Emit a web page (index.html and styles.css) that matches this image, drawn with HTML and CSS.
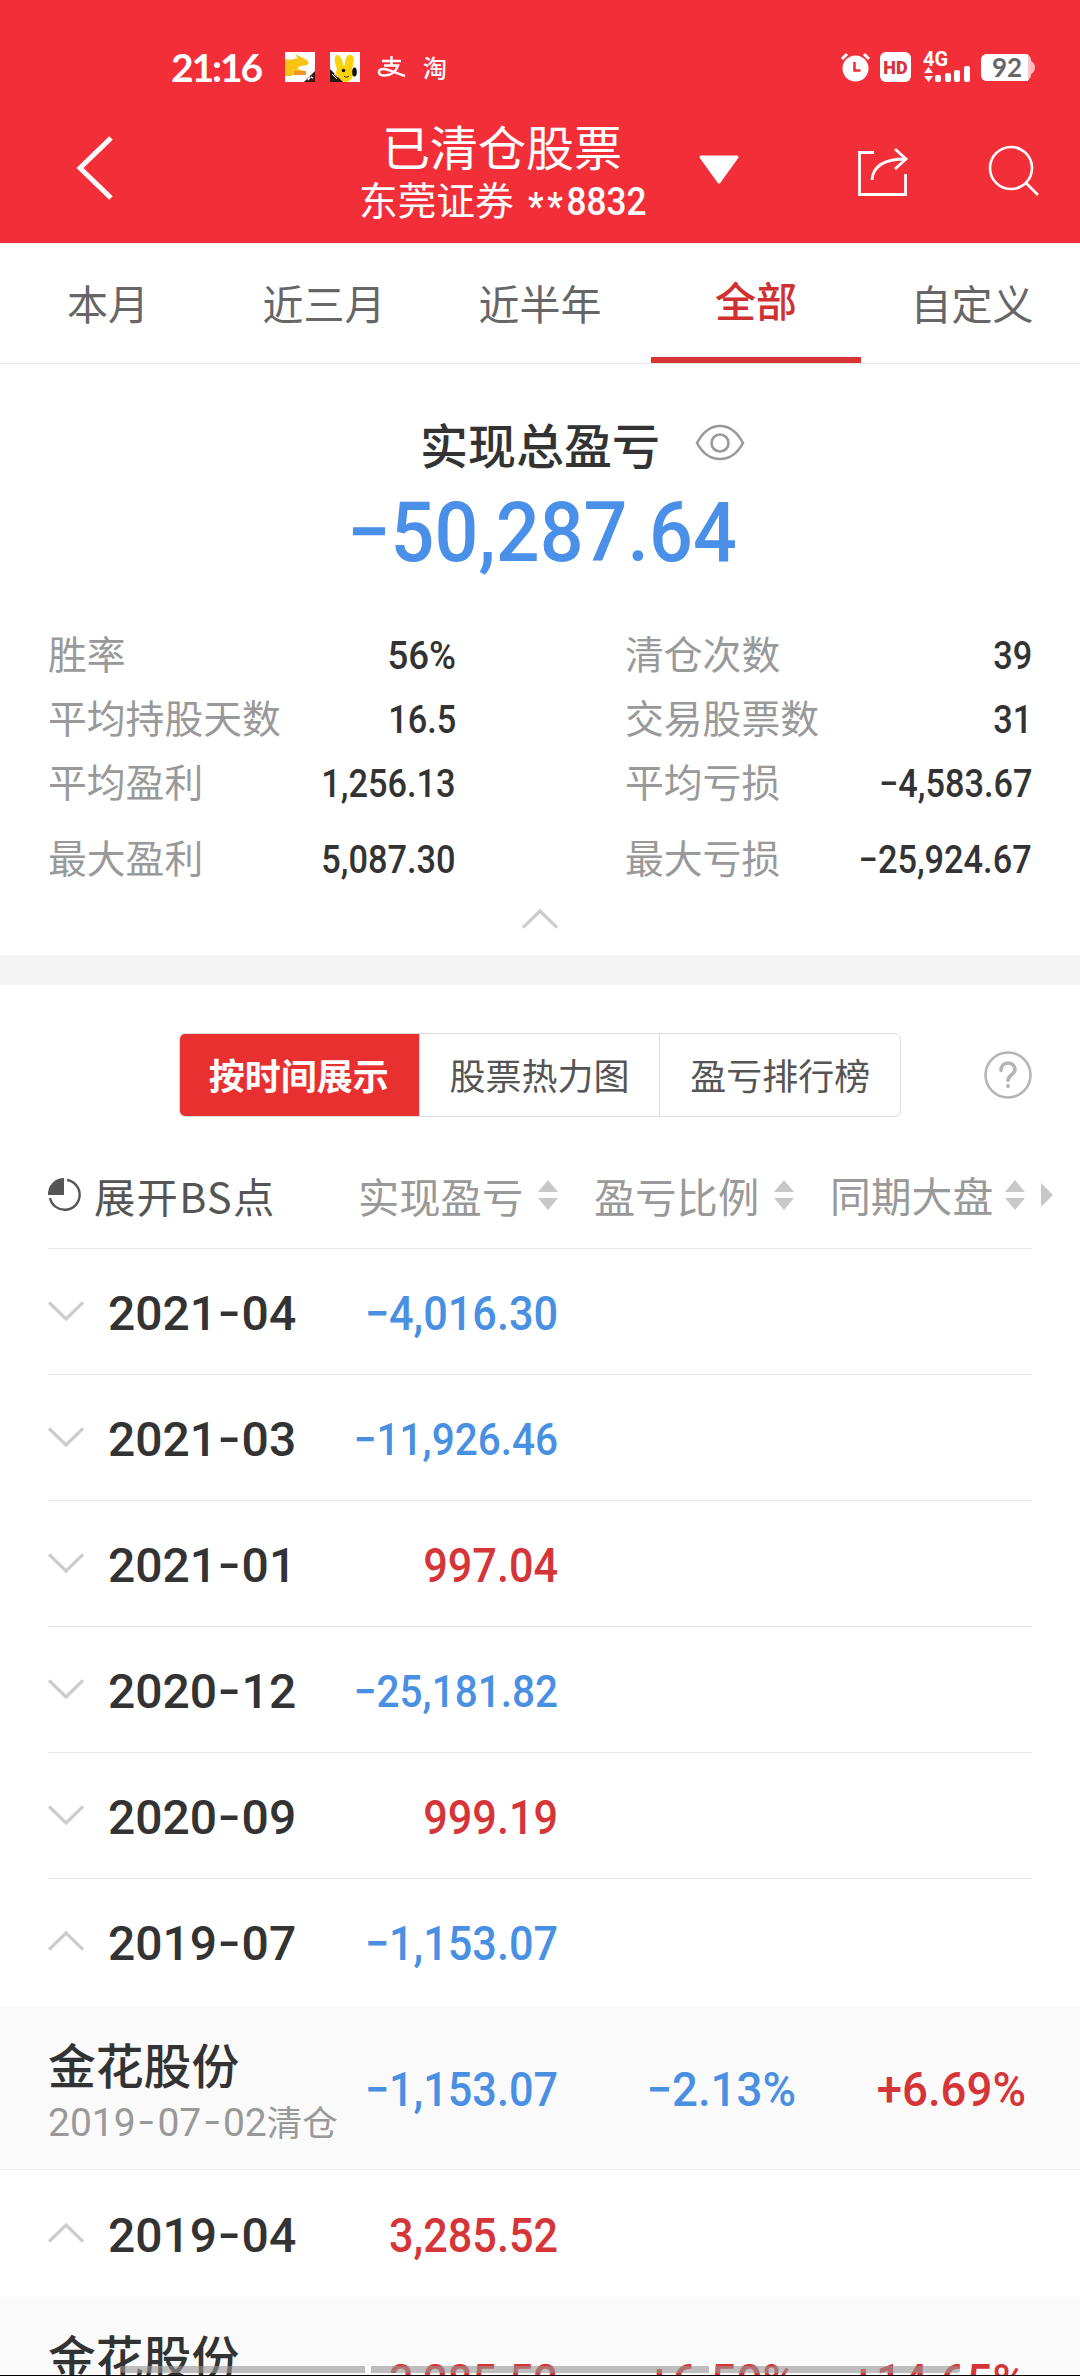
FILE: index.html
```html
<!DOCTYPE html>
<html lang="zh-CN">
<head>
    <meta charset="UTF-8">
    <meta name="viewport" content="width=device-width, initial-scale=1.0">
    <title>已清仓股票</title>
    <link rel="stylesheet" href="styles.css">
</head>
<body>
<!-- shared icons -->
<svg class="defs" width="0" height="0">
    <symbol id="down" viewBox="0 0 36 20"><path d="M1 1.5 18 18 35 1.5" fill="none" stroke="#ccc" stroke-width="3.2"/></symbol>
    <symbol id="up" viewBox="0 0 36 20"><path d="M1 18.5 18 2 35 18.5" fill="none" stroke="#ccc" stroke-width="3.2"/></symbol>
    <symbol id="sort" viewBox="0 0 20 30"><path d="M10 0 20 12H0zM0 18h20L10 30z" fill="#c8c8c8"/></symbol>
</svg>

<div class="page">
    <header class="header">
        <div class="status">
            <span class="time">21:16</span>
            <svg class="app-icon" width="30" height="30" viewBox="0 0 30 30">
                <path d="M0 0h30v30H0z" fill="#fff"/>
                <path d="M0 7c3 1 6 1 9 0l4-1-3-4 6 3 4 2c2 1 3 3 4 4l-2 2-7 1-3 3c2 0 5 1 7 2H9l-2 5H0z" fill="#f8c313"/>
                <path d="M9 19h12v4H8z" fill="#ef9425"/>
                <path d="M30 19v11H19z" fill="#3b1712"/>
                <path d="m23 28 2-3M26 25l2 1" stroke="#fff" stroke-width="1.5"/>
            </svg>
            <svg class="app-icon" width="30" height="30" viewBox="0 0 30 30">
                <path d="M0 0h30v30H0z" fill="#fff"/>
                <path d="M7 17C4 10 4 3 7 3s6 5 6 10h2c0-6 2-11 6-10s3 8 1 14c3 6 0 12-6 13H10C6 27 5 21 7 17z" fill="#fcd20b"/>
                <ellipse cx="24.500" cy="20" rx="2.300" ry="4.500" fill="#111"/>
                <circle cx="13.500" cy="18.500" r="1.800" fill="#111"/>
                <path d="M14 24c2 2 4 1 5 0" fill="none" stroke="#111"/>
                <path d="M0 17v13h13z" fill="#2b1a17"/>
                <path d="m2 22 5 5M4 22l4 3" stroke="#fff"/>
            </svg>
            <svg class="alipay" width="30" height="22" viewBox="0 0 30 22" fill="none" stroke="#fff" stroke-width="2.400">
                <path d="M5 5h19M14.500 0v9M7 9.500h14c-2 6-7 10-13 10-8 0-8-7-1-6.500 6 .5 11 4 21 7"/>
            </svg>
            <span class="tao">淘</span>
            <div class="status-right">
                <svg width="29" height="30" viewBox="0 0 29 30">
                    <circle cx="14.500" cy="16.500" r="13" fill="#fff"/>
                    <path d="m1 7 5-5M28 7l-5-5" stroke="#fff" stroke-width="3"/>
                    <path d="M13.500 10v8.500h6" fill="none" stroke="#f22f39" stroke-width="2.600"/>
                </svg>
                <svg width="31" height="30" viewBox="0 0 31 30">
                    <rect width="31" height="30" rx="6" fill="#fff"/>
                    <text class="hd" x="15.500" y="21.500">HD</text>
                </svg>
                <svg class="signal" width="48" height="32" viewBox="0 0 48 32" fill="#fff">
                    <text class="net" x="0" y="15">4G</text>
                    <path d="M1 22h9l-4.500-6zM1 25h9l-4.500 6z"/>
                    <rect x="12" y="24" width="6" height="7" rx="2"/>
                    <rect x="22" y="22" width="6" height="9" rx="2"/>
                    <rect x="31" y="19" width="6" height="12" rx="2"/>
                    <rect x="41" y="15" width="6" height="16" rx="2"/>
                </svg>
                <svg width="54" height="27" viewBox="0 0 54 27">
                    <path d="M48 6c8 2 8 13 0 15z" fill="#fbb"/>
                    <rect width="50" height="27" rx="6" fill="#fbc4c6"/>
                    <path d="M6 0h41v27H6a6 6 0 0 1-6-6V6a6 6 0 0 1 6-6z" fill="#fff"/>
                    <text class="battery" x="26" y="22.500">92</text>
                </svg>
            </div>
        </div>
        <div class="nav">
            <svg class="back" width="38" height="66" viewBox="0 0 38 66"><path d="M35 3 4 33l31 30" fill="none" stroke="#fff" stroke-width="5"/></svg>
            <div class="nav-title">
                <h1>已清仓股票</h1>
                <p>东莞证券 <span class="account"><span class="mask">**</span>8832</span></p>
            </div>
            <svg class="caret" width="42" height="30" viewBox="0 0 42 30"><path d="M3 2h36L21 27z" fill="#fff" stroke="#fff" stroke-width="3" stroke-linejoin="round"/></svg>
            <svg class="share" width="52" height="50" viewBox="0 0 52 50" fill="none" stroke="#fff" stroke-width="2.800">
                <path d="M17 5.500H2.500v42h46V27"/><path d="M15 33c1-14 12-21 33-21M38 2l11 10-11 10"/>
            </svg>
            <svg class="search" width="52" height="52" viewBox="0 0 52 52" fill="none" stroke="#fff" stroke-width="2.600">
                <circle cx="23" cy="23" r="21"/><path d="m38 38 12 12"/>
            </svg>
        </div>
    </header>

    <nav class="tabs">
        <span class="tab">本月</span>
        <span class="tab">近三月</span>
        <span class="tab">近半年</span>
        <span class="tab active">全部</span>
        <span class="tab">自定义</span>
    </nav>

    <section class="summary">
        <div class="summary-title">
            <h2>实现总盈亏</h2>
            <svg class="eye" width="50" height="38" viewBox="0 0 50 38" fill="none" stroke="#999" stroke-width="2.600">
                <path d="M2 19C9 6 17 2 25 2s16 4 23 17c-7 13-15 16-23 16S9 32 2 19z"/><circle cx="25" cy="19" r="8.500"/>
            </svg>
        </div>
        <div class="total">−50,287.64</div>
        <div class="stats">
            <div class="stat"><span>胜率</span><b class="wide">56%</b></div>
            <div class="stat"><span>清仓次数</span><b>39</b></div>
            <div class="stat"><span>平均持股天数</span><b>16.5</b></div>
            <div class="stat"><span>交易股票数</span><b>31</b></div>
            <div class="stat"><span>平均盈利</span><b>1,256.13</b></div>
            <div class="stat"><span>平均亏损</span><b>−4,583.67</b></div>
            <div class="stat last"><span>最大盈利</span><b>5,087.30</b></div>
            <div class="stat last"><span>最大亏损</span><b>−25,924.67</b></div>
        </div>
        <svg class="collapse" width="36" height="20"><use href="#up"/></svg>
    </section>

    <section class="records">
        <div class="switch-row">
            <div class="switch">
                <span class="on">按时间展示</span>
                <span>股票热力图</span>
                <span>盈亏排行榜</span>
            </div>
            <svg class="help" width="48" height="48" viewBox="0 0 48 48" fill="none" stroke="#b5b5b5">
                <circle cx="24" cy="24" r="22.500" stroke-width="2.600"/>
                <path d="M17 19.500c0-10 14-9.500 14-1 0 5-7 5.500-7 11" stroke-width="3.600" stroke-linecap="round"/>
                <circle cx="24" cy="35" r="1.500" fill="#b5b5b5"/>
            </svg>
        </div>

        <div class="columns">
            <svg class="pie" width="34" height="34" viewBox="0 0 34 34">
                <path d="M16 0v17H0A16 16 0 0 1 16 0z" fill="#555"/>
                <path d="M19 2a15 15 0 1 1-17 18" fill="none" stroke="#555" stroke-width="2.400"/>
            </svg>
            <span class="expand">展开BS点</span>
            <span class="col">实现盈亏<svg width="20" height="30"><use href="#sort"/></svg></span>
            <span class="col">盈亏比例<svg width="20" height="30"><use href="#sort"/></svg></span>
            <span class="col">同期大盘<svg width="20" height="30"><use href="#sort"/></svg></span>
            <svg class="more" width="12" height="24" viewBox="0 0 12 24"><path d="M0 0 12 12 0 24z" fill="#c8c8c8"/></svg>
        </div>

        <div class="month">
            <svg width="36" height="20"><use href="#down"/></svg>
            <span class="date">2021<i>-</i>04</span><span class="num loss">−4,016.30</span>
        </div>
        <div class="month">
            <svg width="36" height="20"><use href="#down"/></svg>
            <span class="date">2021<i>-</i>03</span><span class="num loss long">−11,926.46</span>
        </div>
        <div class="month">
            <svg width="36" height="20"><use href="#down"/></svg>
            <span class="date">2021<i>-</i>01</span><span class="num gain">997.04</span>
        </div>
        <div class="month">
            <svg width="36" height="20"><use href="#down"/></svg>
            <span class="date">2020<i>-</i>12</span><span class="num loss long">−25,181.82</span>
        </div>
        <div class="month">
            <svg width="36" height="20"><use href="#down"/></svg>
            <span class="date">2020<i>-</i>09</span><span class="num gain">999.19</span>
        </div>
        <div class="month open">
            <svg width="36" height="20"><use href="#up"/></svg>
            <span class="date">2019<i>-</i>07</span><span class="num loss">−1,153.07</span>
        </div>
        <div class="detail">
            <div class="stock">
                <h3>金花股份</h3>
                <p>2019<i>-</i>07<i>-</i>02<span>清仓</span></p>
            </div>
            <span class="num loss">−1,153.07</span>
            <span class="num percent loss">−2.13%</span>
            <span class="num percent gain">+6.69%</span>
        </div>
        <div class="month open">
            <svg width="36" height="20"><use href="#up"/></svg>
            <span class="date">2019<i>-</i>04</span><span class="num gain">3,285.52</span>
        </div>
        <div class="detail">
            <div class="stock">
                <h3>金花股份</h3>
            </div>
            <span class="num gain">3,285.52</span>
            <span class="num percent gain">+6.50%</span>
            <span class="num percent gain">+14.65%</span>
        </div>
    </section>

    <div class="gesture-bar"><span></span><span></span><span></span></div>
</div>
</body>
</html>
```
FILE: styles.css
```css
* {
    box-sizing: border-box;
}

body {
    margin: 0;
    background-color: #fff;
    color: #333;
    font-family: Roboto, "Noto Sans CJK SC", sans-serif;
}

h1, h2, h3, p {
    margin: 0;
    font-weight: 400;
}

i {
    font-style: normal;
}

svg {
    display: block;
    flex: none;
    overflow: visible;
}

.defs {
    position: absolute;
}

.page {
    position: relative;
    width: 1080px;
    height: 2376px;
    overflow: hidden;
}

/* header */
.header {
    height: 243px;
    padding-top: 46px;
    background-color: #f22f39;
    color: #fff;
}

.status {
    display: flex;
    align-items: center;
    height: 42px;
    padding: 0 45px 0 171px;
}

.time {
    width: 114px;
    font: 700 39px/42px Lato, sans-serif;
    letter-spacing: -2.1px;
}

.app-icon {
    margin-right: 15px;
}

.alipay {
    margin: 0 16px 0 2px;
}

.tao {
    font: 500 24px/38px "Noto Sans CJK SC", sans-serif;
}

.status-right {
    display: flex;
    align-items: center;
    gap: 10px;
    margin-left: auto;
}

.signal {
    margin-left: 2px;
}

.hd {
    font: 900 18px Roboto, sans-serif;
    fill: #d8323a;
    text-anchor: middle;
}

.net {
    font: 700 20px Roboto, sans-serif;
    fill: #fff;
}

.battery {
    font: 700 26px Lato, sans-serif;
    fill: #666;
    text-anchor: middle;
}

.nav {
    display: flex;
    height: 155px;
    padding: 30px 40px 0 76px;
}

.back {
    margin-top: 17px;
}

.nav-title {
    width: 290px;
    margin: 5px 0 0 244px;
}

.nav-title h1 {
    height: 54px;
    padding-left: 24px;
    font-size: 48px;
    line-height: 54px;
}

.nav-title p {
    display: flex;
    gap: 14px;
    height: 48px;
    padding-left: 1px;
    font-size: 38.7px;
    line-height: 50px;
    white-space: nowrap;
}

.account {
    font-weight: 500;
    transform: scaleX(0.91);
    transform-origin: left;
}

.mask {
    display: inline-block;
    letter-spacing: 4px;
    transform: translateY(5px);
}

.caret {
    margin: 37px 0 0 50px;
}

.share {
    margin: 29px 0 0 117px;
}

.search {
    margin: 27px 0 0 79px;
}

/* period tabs */
.tabs {
    display: flex;
    height: 121px;
    border-bottom: 1px solid #e8e8e8;
}

.tab {
    width: 216px;
    padding-top: 4px;
    font-size: 41px;
    line-height: 118px;
    color: #666;
    text-align: center;
}

.tab.active {
    height: 120px;
    width: 210px;
    margin: 0 3px;
    border-bottom: 6px solid #d93434;
    color: #d13030;
    font-weight: 500;
    line-height: 112px;
}

/* totals */
.summary {
    height: 621px;
    padding: 46px 48px 0;
    border-bottom: 30px solid #f4f4f4;
}

.summary-title {
    display: flex;
    align-items: center;
    height: 66px;
    padding-left: 372px;
}

.summary-title h2 {
    padding-top: 9px;
    font-size: 48px;
    font-weight: 500;
    line-height: 66px;
}

.eye {
    margin-left: 35px;
}

.total {
    height: 112px;
    font-size: 84px;
    font-weight: 500;
    line-height: 114px;
    color: #4a90e8;
    text-align: center;
    transform: translateX(2px) scaleX(0.92);
}

.stats {
    display: grid;
    grid-template-columns: 408px 407px;
    grid-template-rows: 64px 64px 64px 88px;
    column-gap: 169px;
    margin-top: 36px;
}

.stat {
    display: flex;
    justify-content: space-between;
    line-height: 64px;
}

.stat span {
    font-size: 38.8px;
    color: #999;
}

.stat b {
    font-size: 39px;
    font-weight: 500;
    transform: scaleX(0.88);
    transform-origin: right;
}

.stat b.wide {
    transform: scaleX(0.94);
}

.stat.last {
    line-height: 88px;
}

.collapse {
    margin: 5px auto 0;
}

/* list */
.switch-row {
    display: flex;
    align-items: center;
    height: 180px;
    padding: 0 48px 0 179px;
}

.switch {
    display: flex;
    width: 722px;
    height: 84px;
    border: 1px solid #ddd;
    border-radius: 6px;
    overflow: hidden;
}

.switch span {
    flex: 1;
    border-left: 1px solid #ddd;
    font-size: 36px;
    line-height: 88px;
    color: #555;
    text-align: center;
}

.switch .on {
    margin: -1px 0 -1px -1px;
    border: 0;
    background-color: #e93030;
    color: #fff;
    font-weight: 700;
    line-height: 90px;
}

.help {
    margin-left: auto;
}

.columns {
    display: flex;
    align-items: center;
    height: 83px;
    margin: 0 0 0 48px;
    padding-bottom: 24px;
    font-size: 41.3px;
    color: #999;
}

.expand {
    width: 264px;
    margin-left: 12px;
    font-family: "Noto Sans CJK SC", sans-serif;
    letter-spacing: 1.3px;
    color: #555;
}

.col {
    display: flex;
    align-items: center;
    gap: 15px;
    width: 236px;
    white-space: nowrap;
}

.col:nth-of-type(4) {
    gap: 12px;
    font-size: 40.8px;
}

.pie, .col svg, .more {
    margin-top: 1px;
}

.more {
    margin-left: -25px;
}

.month {
    display: flex;
    align-items: center;
    height: 126px;
    margin: 0 48px;
    padding-top: 4px;
    border-top: 1px solid #e8e8e8;
}

.month.open {
    height: 128px;
    padding-top: 2px;
}

.month svg {
    margin-top: -5px;
}

.detail + .month {
    border-top: 0;
}

.date {
    width: 200px;
    margin-left: 24px;
    font-size: 48px;
    font-weight: 500;
}

.date i, .stock i {
    display: inline-block;
    margin: 0 0.085em;
    transform: translateY(-0.05em) scaleX(1.35);
}

.stock i {
    margin: 0 0.14em;
}

.num {
    width: 250px;
    font-size: 48px;
    font-weight: 500;
    text-align: right;
    white-space: nowrap;
    transform: scaleX(0.9);
    transform-origin: right;
}

.num.long {
    font-size: 45px;
}

.num.percent {
    transform: scaleX(0.95);
}

.loss {
    color: #4a90e2;
}

.gain {
    color: #d63538;
}

.detail {
    display: flex;
    height: 164px;
    padding: 0 48px;
    border-bottom: 1px solid #ebebeb;
    background-color: #fafafa;
}

.detail .num {
    width: 230px;
    line-height: 168px;
}

.detail .num:nth-child(2) {
    width: 220px;
}

.detail .num:nth-child(3) {
    width: 238px;
}

.stock {
    width: 290px;
    padding-top: 32px;
}

.stock h3 {
    font-size: 47.8px;
    line-height: 60px;
    font-weight: 500;
}

.stock p {
    font-size: 39px;
    line-height: 51px;
    color: #999;
    white-space: nowrap;
}

.stock p span {
    font-size: 35.5px;
}

/* system bar over the list */
.gesture-bar {
    position: absolute;
    left: 0;
    right: 0;
    bottom: 0;
    display: flex;
    gap: 6px;
    height: 10px;
    padding-left: 120px;
    border-bottom: 1px solid #000;
}

.gesture-bar span {
    width: 245px;
    height: 7px;
    border-radius: 0 0 0 4px;
    background-color: rgba(150, 150, 150, 0.6);
}

.gesture-bar span:nth-child(2) {
    width: 338px;
    border-radius: 0;
}

.gesture-bar span:nth-child(3) {
    border-radius: 0 4px 4px 0;
}
```
